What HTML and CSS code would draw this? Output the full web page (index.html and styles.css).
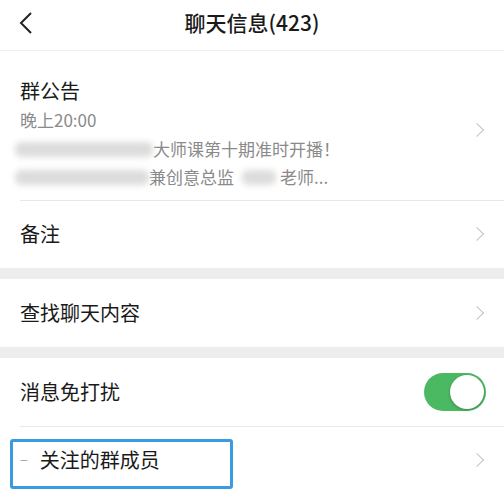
FILE: index.html
```html
<!DOCTYPE html>
<html lang="zh-CN">
<head>
    <meta charset="UTF-8">
    <meta name="viewport" content="width=device-width, initial-scale=1.0">
    <title>聊天信息</title>
    <link rel="stylesheet" href="styles.css">
</head>
<body>
    <div class="header">
        <svg class="back" width="14" height="22" viewBox="0 0 14 22">
            <path d="M12 1 L2 11 L12 21" fill="none" stroke="#222" stroke-width="2"/>
        </svg>
        <h1>聊天信息(423)</h1>
    </div>

    <div class="section">
        <div class="row notice">
            <div class="notice-body">
                <div class="label">群公告</div>
                <div class="sub">晚上20:00</div>
                <div class="sub line">
                    <span class="blur" style="width: 138px"></span>
                    <span>大师课第十期准时开播！</span>
                </div>
                <div class="sub line">
                    <span class="blur" style="width: 134px"></span>
                    <span>兼创意总监</span>
                    <span class="blur small" style="width: 34px"></span>
                    <span>老师...</span>
                </div>
            </div>
            <span class="chevron"></span>
        </div>
        <div class="row">
            <div class="label">备注</div>
            <span class="chevron"></span>
        </div>
    </div>

    <div class="section">
        <div class="row">
            <div class="label">查找聊天内容</div>
            <span class="chevron"></span>
        </div>
    </div>

    <div class="section">
        <div class="row">
            <div class="label">消息免打扰</div>
            <div class="switch on"><span class="knob"></span></div>
        </div>
        <div class="row marked">
            <div class="label"><span class="minus">−</span>关注的群成员</div>
            <span class="chevron"></span>
            <div class="highlight"></div>
        </div>
    </div>
</body>
</html>
```

FILE: styles.css
```css
:root {
    --text-color: #1a1a1a;
    --sub-color: #8a8a8a;
    --line-color: #e8e8e8;
    --band-color: #ededed;
    --green: #4bb862;
    --blue: #3a9be0;
}

* {
    margin: 0;
    padding: 0;
    box-sizing: border-box;
    font-family: 'Noto Sans CJK SC', 'Noto Sans', sans-serif;
}

body {
    background: #fff;
    color: var(--text-color);
    width: 504px;
}

.header {
    position: relative;
    height: 51px;
    display: flex;
    align-items: center;
    justify-content: center;
    border-bottom: 1px solid #efefef;
}

.header h1 {
    font-size: 21px;
    font-weight: 500;
    line-height: 1;
    margin-top: -6px;
}

.back {
    position: absolute;
    left: 19px;
    top: 12px;
}

.section {
    background: #fff;
}

.section + .section {
    border-top: 11px solid var(--band-color);
}

.row {
    position: relative;
    display: flex;
    align-items: center;
    justify-content: space-between;
    height: 68px;
    padding: 0 22px 0 20px;
}

.row + .row::before {
    content: '';
    position: absolute;
    top: 0;
    left: 20px;
    right: 0;
    border-top: 1px solid var(--line-color);
}

.label {
    font-size: 20px;
    line-height: 1;
    display: flex;
    align-items: center;
}

.notice {
    height: 149px;
    padding-top: 22px;
}

.notice .label {
    margin-bottom: 5px;
}

.notice .chevron {
    margin-top: -14px;
}

.sub {
    font-size: 17px;
    line-height: 28.5px;
    color: var(--sub-color);
}

.line {
    display: flex;
    align-items: center;
    margin-left: -5px;
}

.blur {
    display: inline-block;
    height: 15px;
    background: #dcdcdc;
    border-radius: 6px;
    filter: blur(3px);
}

.blur.small {
    margin: 0 4px 0 8px;
}

.chevron {
    width: 10px;
    height: 10px;
    border-top: 1.6px solid #c2c2c2;
    border-right: 1.6px solid #c2c2c2;
    transform: rotate(45deg);
    flex-shrink: 0;
}

.switch {
    width: 62px;
    height: 38px;
    border-radius: 19px;
    background: var(--green);
    position: relative;
    margin-right: -4px;
}

.knob {
    position: absolute;
    right: 2px;
    top: 2px;
    width: 34px;
    height: 34px;
    border-radius: 50%;
    background: #fff;
    box-shadow: 0 1px 3px rgba(0, 0, 0, 0.25);
}

.minus {
    color: #aaa;
    font-size: 14px;
    margin-right: 12px;
}

.marked::after {
    content: '';
    position: absolute;
    bottom: -1px;
    left: 20px;
    right: 0;
    border-top: 1px solid var(--line-color);
}

.highlight {
    position: absolute;
    left: 10px;
    top: 13px;
    width: 223px;
    height: 50px;
    border: 3px solid var(--blue);
    border-radius: 3px;
}
```
